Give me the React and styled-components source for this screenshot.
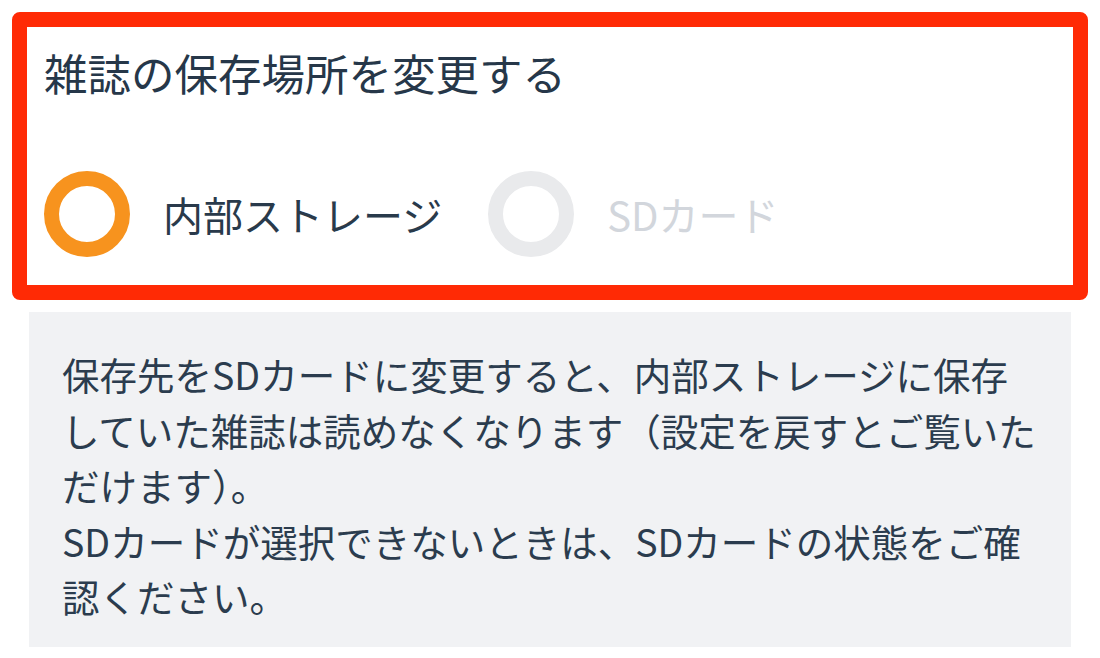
import React, { useState } from 'react';
import styled, { createGlobalStyle } from 'styled-components';

const GlobalStyle = createGlobalStyle`
  html, body {
    margin: 0;
    padding: 0;
    background: #ffffff;
  }
  body {
    font-family: "Noto Sans CJK JP", "Noto Sans", sans-serif;
    color: #293a4b;
  }
`;

const Page = styled.div`
  width: 1100px;
  padding: 12px;
  box-sizing: border-box;
`;

const Highlight = styled.section`
  border: 15px solid #ff2a05;
  border-radius: 8px;
  padding: 16px 17px 27px;
`;

const Title = styled.h2`
  margin: 0;
  font-size: 43.5px;
  line-height: 60px;
  font-weight: 400;
  color: #263749;
  letter-spacing: 0;
`;

const Options = styled.div`
  display: flex;
  align-items: center;
  margin-top: 67px;
  height: 88px;
`;

const Option = styled.label`
  display: flex;
  align-items: center;
  gap: 33px;
  margin-right: 46px;
  cursor: ${p => (p.disabled ? 'default' : 'pointer')};
`;

const Ring = styled.span`
  width: 86px;
  height: 86px;
  box-sizing: border-box;
  border-radius: 50%;
  border: 15px solid ${p => (p.disabled ? '#e9eaec' : '#f7931e')};
  background: #fff;
`;

const OptionText = styled.span`
  font-size: 40px;
  line-height: 1;
  color: ${p => (p.disabled ? '#d2d6dc' : '#293a4b')};
`;

const Note = styled.div`
  margin: 12px 17px 0;
  background: #f1f2f4;
  padding: 34px 20px 23px 33px;
  height: 335px;
  box-sizing: border-box;
  font-size: 37.5px;
  line-height: 55.5px;
  color: #2b3c4e;
  white-space: nowrap;
`;

const Line = styled.div``;

const options = [
  { id: 'internal', label: '内部ストレージ', disabled: false },
  { id: 'sd', label: 'SDカード', disabled: true },
];

export default function App() {
  const [selected, setSelected] = useState('internal');

  return (
    <>
      <GlobalStyle />
      <Page>
        <Highlight>
          <Title>雑誌の保存場所を変更する</Title>
          <Options>
            {options.map(o => (
              <Option
                key={o.id}
                disabled={o.disabled}
                onClick={() => !o.disabled && setSelected(o.id)}
              >
                <Ring disabled={o.disabled || selected !== o.id} />
                <OptionText disabled={o.disabled}>{o.label}</OptionText>
              </Option>
            ))}
          </Options>
        </Highlight>
        <Note>
          <Line>保存先をSDカードに変更すると、内部ストレージに保存</Line>
          <Line>していた雑誌は読めなくなります（設定を戻すとご覧いた</Line>
          <Line>だけます）。</Line>
          <Line>SDカードが選択できないときは、SDカードの状態をご確</Line>
          <Line>認ください。</Line>
        </Note>
      </Page>
    </>
  );
}
